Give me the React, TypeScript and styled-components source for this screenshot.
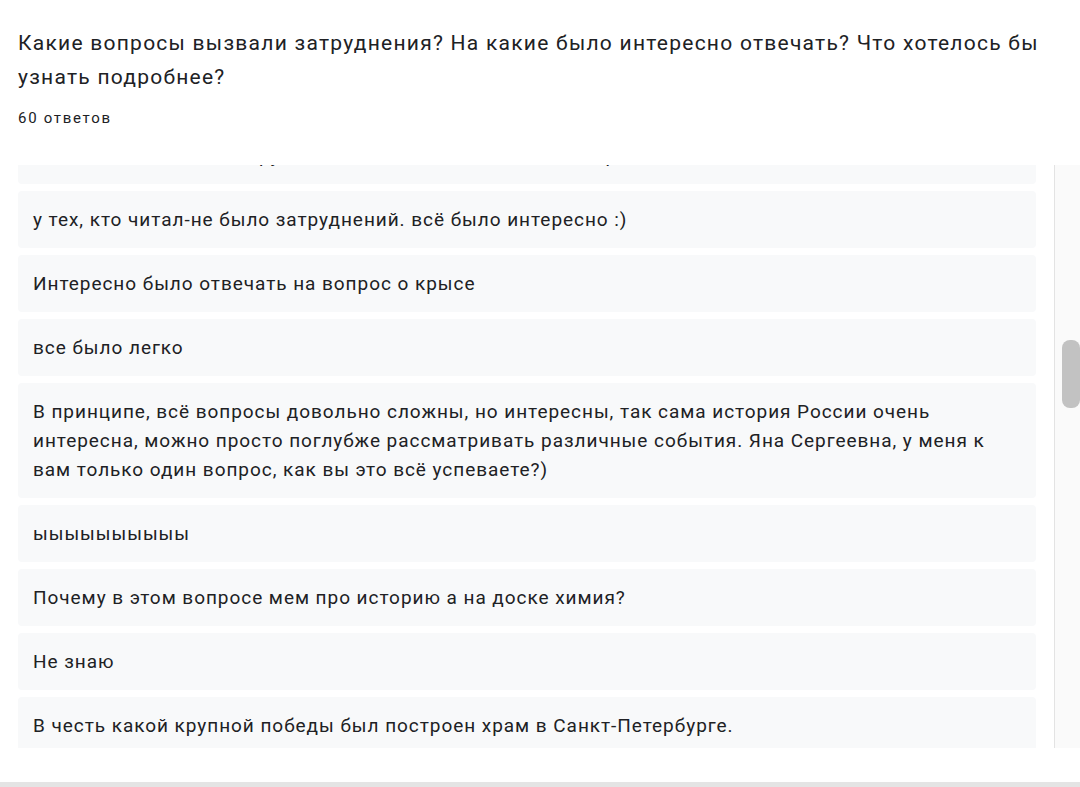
import React, { useLayoutEffect, useRef } from "react";
import styled, { createGlobalStyle } from "styled-components";

const GlobalStyle = createGlobalStyle`
  html, body {
    margin: 0;
    padding: 0;
    background: #ffffff;
  }
  body {
    font-family: Roboto, "Noto Sans", "Liberation Sans", sans-serif;
    color: #202124;
  }
`;

const answers: string[] = [
  "Ничего не вызвало затруднений, всё было понятно и интересно",
  "у тех, кто читал-не было затруднений. всё было интересно :)",
  "Интересно было отвечать на вопрос о крысе",
  "все было легко",
  "В принципе, всё вопросы довольно сложны, но интересны, так сама история России очень интересна, можно просто поглубже рассматривать различные события. Яна Сергеевна, у меня к вам только один вопрос, как вы это всё успеваете?)",
  "ыыыыыыыыыы",
  "Почему в этом вопросе мем про историю а на доске химия?",
  "Не знаю",
  "В честь какой крупной победы был построен храм в Санкт-Петербурге.",
];

const App: React.FC = () => {
  const listRef = useRef<HTMLDivElement>(null);

  useLayoutEffect(() => {
    if (listRef.current) listRef.current.scrollTop = 38;
  }, []);

  return (
    <Page>
      <GlobalStyle />
      <Header>
        <Title>
          Какие вопросы вызвали затруднения? На какие было интересно отвечать? Что хотелось бы
          узнать подробнее?
        </Title>
        <Count>60 ответов</Count>
      </Header>
      <Body>
        <Viewport ref={listRef}>
          <List>
            {answers.map((text, i) => (
              <Answer key={i}>{text}</Answer>
            ))}
          </List>
        </Viewport>
        <Track>
          <Thumb />
        </Track>
      </Body>
      <Footer />
    </Page>
  );
};

const Page = styled.div`
  width: 1080px;
  height: 787px;
  display: flex;
  flex-direction: column;
  overflow: hidden;
`;

const Header = styled.div`
  padding: 26px 18px 0 18px;
`;

const Title = styled.div`
  width: 1044px;
  font-size: 21px;
  letter-spacing: 1.25px;
  line-height: 34px;
  color: #202124;
`;

const Count = styled.div`
  margin-top: 14px;
  font-size: 15px;
  letter-spacing: 1.7px;
  line-height: 20px;
  color: #202124;
`;

const Body = styled.div`
  margin-top: 37px;
  height: 583px;
  display: flex;
`;

const Viewport = styled.div`
  width: 1021px;
  margin-left: 18px;
  overflow: hidden;
`;

const List = styled.div`
  display: flex;
  flex-direction: column;
  gap: 7px;
`;

const Answer = styled.div`
  background: #f8f9fa;
  border-radius: 4px;
  padding: 14px 15px;
  font-size: 19px;
  letter-spacing: 0.95px;
  line-height: 29px;
  color: #202124;
`;

const Track = styled.div`
  margin-left: 18px;
  flex: 1;
  border-left: 1px solid #e3e3e3;
  background: #fafafa;
  padding-left: 7px;
`;

const Thumb = styled.div`
  margin-top: 175px;
  width: 18px;
  height: 68px;
  border-radius: 8px;
  background: #c2c2c2;
`;

const Footer = styled.div`
  margin-top: auto;
  height: 5px;
  background: #e4e4e4;
`;

export default App;
